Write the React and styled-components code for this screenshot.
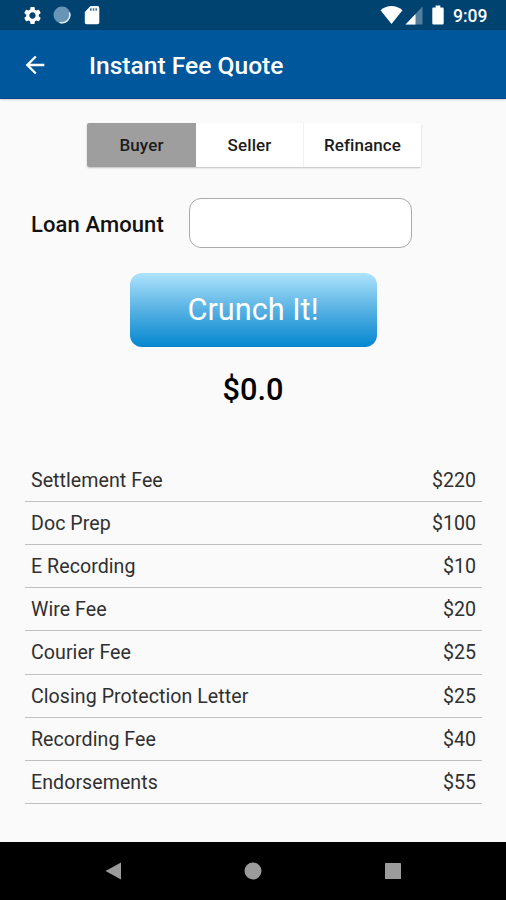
import React, { useState } from "react";
import styled, { createGlobalStyle } from "styled-components";
import { MdSettings, MdArrowBack } from "react-icons/md";

const GlobalStyle = createGlobalStyle`
  * { box-sizing: border-box; }
  body { margin: 0; background: #fafafa; }
`;

const Screen = styled.div`
  width: 506px;
  height: 900px;
  display: flex;
  flex-direction: column;
  overflow: hidden;
  background: #fafafa;
  color: #111;
  font-family: Roboto, "Liberation Sans", sans-serif;
`;

const StatusBar = styled.header`
  height: 30px;
  flex: none;
  display: flex;
  justify-content: space-between;
  padding: 0 18px 0 22px;
  background: #004270;
  color: #fff;
`;

const StatusGroup = styled.div`
  display: flex;
  align-items: center;
  height: 30px;
  svg { display: block; flex: none; }
`;

const Gap = styled.span`
  width: ${(p) => p.$w}px;
`;

const Clock = styled.span`
  width: 35px;
  font-size: 17.5px;
  font-weight: 500;
  line-height: 20px;
  padding-top: 2px;
  white-space: nowrap;
`;

const AppBar = styled.div`
  height: 69px;
  flex: none;
  display: flex;
  align-items: center;
  padding: 1px 0 0 21px;
  background: #00579c;
  border-bottom: 1px solid #064585;
  box-shadow: 0 1px 2px rgba(0, 0, 0, 0.16);
  color: #fff;
`;

const BackButton = styled.button`
  width: 68px;
  padding: 0;
  border: 0;
  background: none;
  color: inherit;
  text-align: left;
  svg { display: block; }
`;

const Title = styled.h1`
  margin: 0;
  padding-top: 2px;
  font-size: 24.6px;
  font-weight: 500;
  line-height: 30px;
`;

const Main = styled.main`
  flex: 1;
  display: flex;
  flex-direction: column;
  align-items: center;
  padding-top: 24px;
`;

const Segments = styled.div`
  display: flex;
  width: 334px;
  height: 44px;
  border-radius: 2px;
  background: #fff;
  box-shadow: 0 1px 2px rgba(0, 0, 0, 0.24);
  overflow: hidden;
  margin-left: 2px;
  flex: none;
`;

const Segment = styled.button`
  width: ${(p) => p.$w}px;
  padding: 0;
  border: 0;
  border-left: ${(p) => (p.$divided ? "1px solid #f0f0f0" : "0")};
  background: ${(p) => (p.$active ? "#9e9e9e" : "#fff")};
  color: #1c1c1c;
  font: 500 17px/44px Roboto, sans-serif;
  letter-spacing: 0.1px;
`;

const LoanRow = styled.label`
  display: flex;
  align-items: center;
  align-self: stretch;
  height: 50px;
  margin-top: 31px;
  padding-left: 31px;
`;

const LoanLabel = styled.span`
  width: 158px;
  padding-top: 3px;
  font-size: 22px;
  font-weight: 500;
  line-height: 26px;
  letter-spacing: 0.1px;
  white-space: nowrap;
`;

const LoanInput = styled.input`
  width: 223px;
  height: 50px;
  border: 1px solid #aaa;
  border-radius: 12px;
  background: #fff;
  padding: 0 12px;
  font: 400 20px Roboto, sans-serif;
  outline: none;
`;

const CrunchButton = styled.button`
  width: 247px;
  height: 74px;
  flex: none;
  margin-top: 25px;
  padding: 0;
  border: 0;
  border-radius: 12px;
  background: linear-gradient(#aee3fc, #56b1e3 50%, #0487d0);
  color: #fff;
  font: 400 30.7px/74px Roboto, sans-serif;
`;

const Total = styled.output`
  margin-top: 24px;
  height: 38px;
  font-size: 30.7px;
  font-weight: 500;
  line-height: 38px;
  color: #000;
`;

const FeeList = styled.ul`
  list-style: none;
  align-self: stretch;
  margin: 50px 24px 0 25px;
  padding: 0;
`;

const FeeRow = styled.li`
  display: flex;
  justify-content: space-between;
  height: 43.12px;
  padding: 0 6px;
  border-bottom: 1px solid #c0c0c0;
  font-size: 19.6px;
  line-height: 43px;
  color: #303030;
`;

const FeeName = styled.span`
  letter-spacing: 0.05px;
`;

const FeeAmount = styled.span`
  letter-spacing: 0;
`;

const NavBar = styled.nav`
  height: 58px;
  flex: none;
  display: flex;
  align-items: center;
  justify-content: space-between;
  padding: 0 104px;
  background: #000;
`;

const NavButton = styled.button`
  width: 18px;
  height: 18px;
  padding: 0;
  border: 0;
  background: none;
  svg { display: block; fill: #9b9b9b; }
`;

const fees = [
  ["Settlement Fee", "$220"],
  ["Doc Prep", "$100"],
  ["E Recording", "$10"],
  ["Wire Fee", "$20"],
  ["Courier Fee", "$25"],
  ["Closing Protection Letter", "$25"],
  ["Recording Fee", "$40"],
  ["Endorsements", "$55"],
];

const tabs = [
  { name: "Buyer", width: 109 },
  { name: "Seller", width: 107 },
  { name: "Refinance", width: 118 },
];

function StatusIcons() {
  return (
    <StatusBar>
      <StatusGroup>
        <MdSettings size={21} />
        <Gap $w={10} />
        <svg width="18" height="18" viewBox="0 0 18 18">
          <circle cx="9" cy="9" r="8.5" fill="#6894b5" />
          <path d="M16.6 7.2A7.8 7.8 0 0 1 7.2 16.6" fill="none" stroke="#e4edf4" strokeWidth="1.5" strokeLinecap="round" />
        </svg>
        <Gap $w={13} />
        <svg width="16" height="20" viewBox="0 0 16 20">
          <path d="M6.5 1H13.5Q15.3 1 15.3 3V17.5Q15.3 19.3 13.5 19.3H2.5Q.8 19.3 .8 17.5V7Z" fill="#fff" />
          <path d="M6 3.3h1.6v2.5H6zM8.7 3.3h1.6v2.5H8.7zM11.4 3.3H13v2.5h-1.6z" fill="#47779c" />
        </svg>
      </StatusGroup>
      <StatusGroup>
        <svg width="23" height="20" viewBox="0 0 23 20">
          <path d="M.5 5.2Q11.5-3 22.5 5.2L11.5 19Z" fill="#fff" />
        </svg>
        <Gap $w={2} />
        <svg width="18" height="20" viewBox="0 0 18 20">
          <path d="M17.5 1.5V19.5H.5Z" fill="#537f9f" />
          <path d="M10.5 9V19.5H.5Z" fill="#fff" />
        </svg>
        <Gap $w={9} />
        <svg width="12" height="20" viewBox="0 0 12 20">
          <path d="M3.7.5H8.3V2.4H10.5Q11.7 2.4 11.7 3.8V18.3Q11.7 19.5 10.5 19.5H1.5Q.3 19.5 .3 18.3V3.8Q.3 2.4 1.5 2.4H3.7Z" fill="#fff" />
        </svg>
        <Gap $w={9} />
        <Clock>9:09</Clock>
      </StatusGroup>
    </StatusBar>
  );
}

export default function App() {
  const [tab, setTab] = useState("Buyer");
  return (
    <>
      <GlobalStyle />
      <Screen>
        <StatusIcons />
        <AppBar>
          <BackButton aria-label="Back">
            <MdArrowBack size={28} />
          </BackButton>
          <Title>Instant Fee Quote</Title>
        </AppBar>
        <Main>
          <Segments>
            {tabs.map((t, i) => (
              <Segment
                key={t.name}
                $w={t.width}
                $active={tab === t.name}
                $divided={i === 2}
                onClick={() => setTab(t.name)}
              >
                {t.name}
              </Segment>
            ))}
          </Segments>
          <LoanRow>
            <LoanLabel>Loan Amount</LoanLabel>
            <LoanInput />
          </LoanRow>
          <CrunchButton>Crunch It!</CrunchButton>
          <Total>$0.0</Total>
          <FeeList>
            {fees.map(([name, amount]) => (
              <FeeRow key={name}>
                <FeeName>{name}</FeeName>
                <FeeAmount>{amount}</FeeAmount>
              </FeeRow>
            ))}
          </FeeList>
        </Main>
        <NavBar>
          <NavButton aria-label="Back">
            <svg width="18" height="18"><path d="M1.5 9L17 .5V17.5Z" /></svg>
          </NavButton>
          <NavButton aria-label="Home">
            <svg width="18" height="18"><circle cx="9" cy="9" r="8.5" /></svg>
          </NavButton>
          <NavButton aria-label="Recents">
            <svg width="18" height="18"><rect x="1" y="1" width="16" height="16" rx=".6" /></svg>
          </NavButton>
        </NavBar>
      </Screen>
    </>
  );
}
